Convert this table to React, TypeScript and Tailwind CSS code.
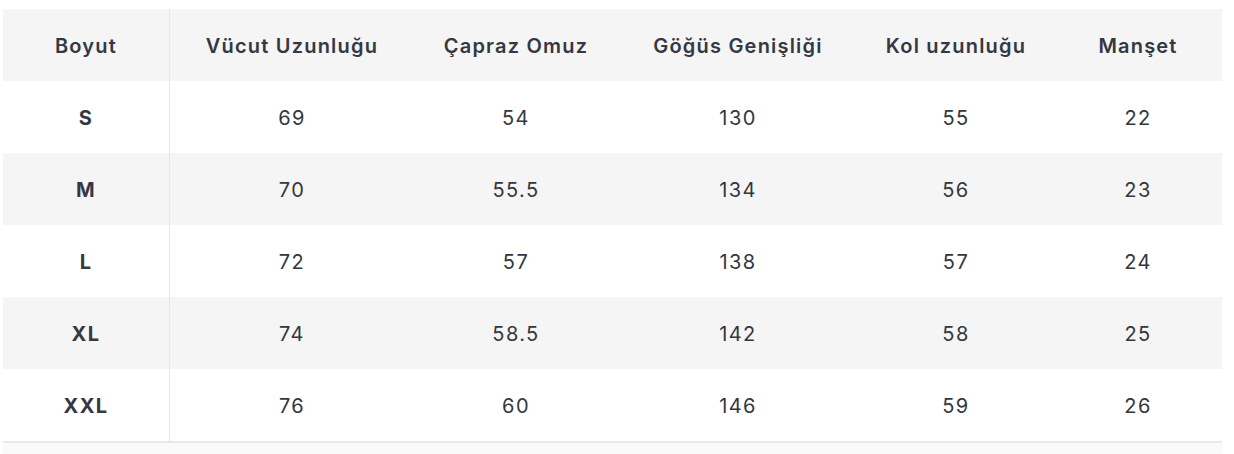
import React from "react";

const headers = ["Boyut", "Vücut Uzunluğu", "Çapraz Omuz", "Göğüs Genişliği", "Kol uzunluğu", "Manşet"];
const rows = [
  ["S", "69", "54", "130", "55", "22"],
  ["M", "70", "55.5", "134", "56", "23"],
  ["L", "72", "57", "138", "57", "24"],
  ["XL", "74", "58.5", "142", "58", "25"],
  ["XXL", "76", "60", "146", "59", "26"],
];
const widths = ["w-[167px]", "w-[244px]", "w-[204px]", "w-[240px]", "w-[196px]", "w-[168px]"];

export default function App() {
  return (
    <div className="w-[1234px] h-[454px] bg-white pt-[9px] pl-[3px]" style={{ fontFamily: "Inter, 'Noto Sans', sans-serif" }}>
      <div className="w-[1219px]">
        <div className="flex h-[72px] bg-[#f5f5f5]">
          {headers.map((h, i) => (
            <div
              key={h}
              className={`${widths[i]} flex items-center justify-center pt-[1px] text-[20px] tracking-[0.06em] font-semibold text-[#333844] ${i === 0 ? "border-r border-[#e6e6e6]" : ""}`}
            >
              {h}
            </div>
          ))}
        </div>
        {rows.map((r, ri) => (
          <div key={r[0]} className={`flex h-[72px] ${ri % 2 === 1 ? "bg-[#f5f5f5]" : "bg-white"}`}>
            {r.map((c, i) => (
              <div
                key={i}
                className={`${widths[i]} flex items-center justify-center pt-[2px] text-[20px] tracking-[0.07em] ${i === 0 ? "font-bold text-[#333844] border-r border-[#e6e6e6]" : "text-[#333640]"}`}
              >
                {c}
              </div>
            ))}
          </div>
        ))}
        <div className="h-[13px] bg-[#fafafa] border-t-2 border-[#e8e8e8]" />
      </div>
    </div>
  );
}
